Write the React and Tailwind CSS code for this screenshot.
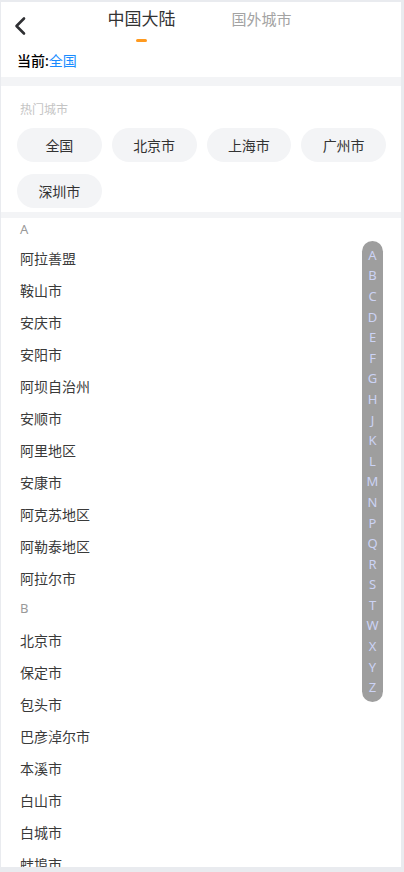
import { useState } from 'react'

const HOT = ['全国', '北京市', '上海市', '广州市', '深圳市']

const GROUPS = [
  { letter: 'A', cities: ['阿拉善盟', '鞍山市', '安庆市', '安阳市', '阿坝自治州', '安顺市', '阿里地区', '安康市', '阿克苏地区', '阿勒泰地区', '阿拉尔市'] },
  { letter: 'B', cities: ['北京市', '保定市', '包头市', '巴彦淖尔市', '本溪市', '白山市', '白城市', '蚌埠市', '亳州市', '滨州市'] },
]

const INDEX = ['A', 'B', 'C', 'D', 'E', 'F', 'G', 'H', 'J', 'K', 'L', 'M', 'N', 'P', 'Q', 'R', 'S', 'T', 'W', 'X', 'Y', 'Z']

export default function App() {
  const [tab, setTab] = useState(0)
  const [current, setCurrent] = useState('全国')

  return (
    <div className="h-[872px] w-[404px] overflow-hidden bg-[#e9ebef] pt-[2px] pl-[1px] pr-[3px] pb-[5px]"
      style={{ fontFamily: '"Noto Sans", "Noto Sans CJK SC", sans-serif' }}>
      <div className="relative h-full overflow-hidden bg-white">
        {/* Header */}
        <div className="relative h-[42px]">
          <button className="absolute left-[12px] top-[14px] text-[#333]">
            <svg width="14" height="20" viewBox="0 0 14 20" fill="none">
              <path d="M11 2.5 L3.5 10 L11 17.5" stroke="#2f3033" strokeWidth="2.6" strokeLinecap="round" strokeLinejoin="round" />
            </svg>
          </button>
          <div className="flex justify-center gap-[56px] pt-[5px] pr-[3px]">
            {['中国大陆', '国外城市'].map((t, i) => (
              <button key={t} onClick={() => setTab(i)} className="flex flex-col items-center">
                <span className={`h-[24px] leading-[24px] ${tab === i ? 'text-[17px] text-[#333]' : 'text-[15px] text-[#a3a3a3]'}`}>{t}</span>
                <span className={`mt-[8px] h-[3px] w-[11px] rounded-full ${tab === i ? 'bg-[#ff9a1f]' : 'bg-transparent'}`} />
              </button>
            ))}
          </div>
        </div>
        <div className="flex h-[33px] items-center pl-[16px] text-[14px] leading-none">
          <span className="font-medium text-black">当前:</span>
          <span className="text-[#1a8cff]">{current}</span>
        </div>

        <div className="h-[9px] bg-[#f3f4f6]" />

        {/* Hot cities */}
        <div className="pt-[16px] pb-[4px] pl-[16px] pr-[15px]">
          <p className="h-[16px] pl-[3px] text-[12px] leading-[16px] text-[#c4c4c4]">热门城市</p>
          <div className="mt-[10px] grid grid-cols-4 gap-x-[10px] gap-y-[12px]">
            {HOT.map(c => (
              <button key={c} onClick={() => setCurrent(c)}
                className="h-[34px] rounded-full bg-[#f3f4f6] text-[14px] text-[#333]">
                {c}
              </button>
            ))}
          </div>
        </div>

        <div className="h-[6px] bg-[#f3f4f6]" />

        {/* City list */}
        <div>
          {GROUPS.map((g, gi) => (
            <div key={g.letter}>
              <div className={`flex items-center pl-[19px] text-[13px] text-[#999] ${gi === 0 ? 'h-[24px]' : 'h-[30px]'}`}>{g.letter}</div>
              {g.cities.map(c => (
                <div key={c} onClick={() => setCurrent(c)} className="flex h-[32px] items-center pl-[19px] text-[14px] text-[#3a3a3a]">
                  {c}
                </div>
              ))}
            </div>
          ))}
        </div>

        {/* Letter index */}
        <div className="absolute right-[18px] top-[239px] flex w-[21px] flex-col items-center rounded-full bg-[#9e9e9e] py-[4px]">
          {INDEX.map(l => (
            <span key={l} className="flex h-[20.6px] items-center text-[13px] leading-none text-[#ccd3f5]">{l}</span>
          ))}
        </div>
      </div>
    </div>
  )
}
